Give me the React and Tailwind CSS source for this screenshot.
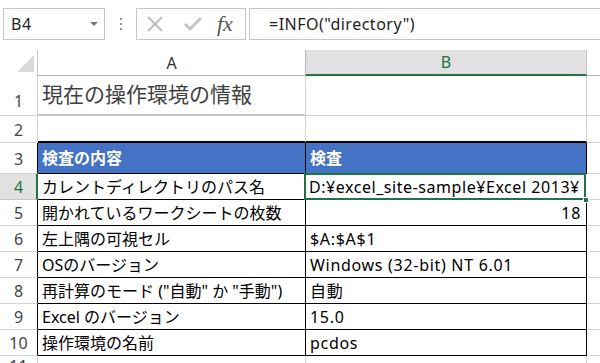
import React from 'react';

const font = { fontFamily: '"Noto Sans", "Noto Sans CJK JP", sans-serif' };

const rows = [
	{ n: '5', a: '開かれているワークシートの枚数', b: '18', right: true },
	{ n: '6', a: '左上隅の可視セル', b: '$A:$A$1' },
	{ n: '7', a: 'OSのバージョン', b: 'Windows (32-bit) NT 6.01' },
	{ n: '8', a: '再計算のモード ("自動" か "手動")', b: '自動' },
	{ n: '9', a: 'Excel のバージョン', b: '15.0' },
	{ n: '10', a: '操作環境の名前', b: 'pcdos' },
];

const FormulaBar = () => (
	<div className="flex h-[50px] items-start pt-[8px]">
		<div className="ml-[3px] flex h-[32px] w-[102px] items-center justify-between border border-[#c6c6c6] pl-[7px] pr-[5px] text-[16px] tracking-[0.5px] text-[#222]">
			<span>B4</span>
			<svg width="10" height="6" viewBox="0 0 10 6">
				<path d="M1 1 L9 1 L5 5 Z" fill="#777" />
			</svg>
		</div>
		<div className="flex h-[32px] w-[31px] flex-col items-center justify-center gap-[3px]">
			<span className="h-[2px] w-[2px] bg-[#999]" />
			<span className="h-[2px] w-[2px] bg-[#999]" />
			<span className="h-[2px] w-[2px] bg-[#999]" />
		</div>
		<div className="flex h-[32px] w-[110px] items-center border border-[#c6c6c6]">
			<svg className="ml-[9px]" width="18" height="18" viewBox="0 0 18 18">
				<path d="M2 2 L16 16 M16 2 L2 16" stroke="#bdbdbd" strokeWidth="2" />
			</svg>
			<svg className="ml-[19px]" width="20" height="16" viewBox="0 0 20 16">
				<path d="M2 8 L7 13 L18 2" stroke="#c4c4c4" strokeWidth="3" fill="none" />
			</svg>
			<span
				className="ml-[14px] text-[22px] italic leading-none text-[#555]"
				style={{ fontFamily: '"Liberation Serif", serif' }}
			>
				fx
			</span>
		</div>
		<div className="ml-[3px] flex h-[32px] flex-1 items-center border border-y-[#c6c6c6] border-l-[#c6c6c6] border-r-0 pl-[19px] text-[16px] tracking-[0.5px] text-[#222]">
			=INFO("directory")
		</div>
	</div>
);

const App = () => {
	return (
		<div className="h-[363px] w-[600px] overflow-hidden bg-white" style={font}>
			<FormulaBar />

			{/* column headers */}
			<div className="flex h-[26px]">
				<div className="relative w-[38px] border-r border-[#c6c6c6]">
					<svg className="absolute left-[17px] top-[5px]" width="17" height="17" viewBox="0 0 17 17">
						<path d="M17 0 L17 17 L0 17 Z" fill="#dadada" />
					</svg>
				</div>
				<div className="flex w-[268px] items-center justify-center border-b border-r border-[#b5b5b5] text-[16px] text-[#333]">
					A
				</div>
				<div className="flex w-[281px] items-center justify-center border-b-[2px] border-r border-b-[#217346] border-r-[#c6c6c6] bg-[#e1e1e1] text-[16px] text-[#217346]">
					B
				</div>
				<div className="flex-1 border-b border-[#b5b5b5]" />
			</div>

			{/* row 1 */}
			<div className="flex h-[40px]">
				<div className="flex w-[38px] items-end justify-center border-b border-r border-[#d4d4d4] pb-[2px] text-[16px] text-[#444]">
					1
				</div>
				<div className="flex w-[268px] items-end border-b-[2px] border-r border-b-[#c8c8c8] border-r-[#d4d4d4] pb-[4px] pl-[4px] text-[21px] text-[#404040]">
					現在の操作環境の情報
				</div>
				<div className="w-[281px] border-b border-r border-[#d4d4d4]" />
				<div className="flex-1 border-b border-[#d4d4d4]" />
			</div>

			{/* row 2 */}
			<div className="flex h-[27px]">
				<div className="flex w-[38px] items-end justify-center border-b border-r border-[#d4d4d4] text-[16px] text-[#444]">
					2
				</div>
				<div className="w-[268px] border-b-[2px] border-r border-b-black border-r-[#d4d4d4]" />
				<div className="w-[281px] border-b-[2px] border-r border-b-black border-r-[#d4d4d4]" />
				<div className="flex-1 border-b border-[#d4d4d4]" />
			</div>

			{/* row 3 header */}
			<div className="flex h-[31px]">
				<div className="flex w-[38px] items-end justify-center border-b border-r border-b-[#d4d4d4] border-r-black pb-[2px] text-[16px] text-[#444]">
					3
				</div>
				<div className="flex w-[268px] items-end border-b border-r border-black bg-[#4472c4] pb-[3px] pl-[4px] text-[16px] font-bold text-white">
					検査の内容
				</div>
				<div className="flex w-[281px] items-end border-b border-r border-black bg-[#4472c4] pb-[3px] pl-[4px] text-[16px] font-bold text-white">
					検査
				</div>
				<div className="flex-1 border-b border-[#d4d4d4]" />
			</div>

			{/* row 4 selected */}
			<div className="flex h-[26px]">
				<div className="flex w-[38px] items-end justify-center border-b border-r-[2px] border-b-[#c6c6c6] border-r-[#217346] bg-[#e1e1e1] pl-[1px] text-[16px] text-[#217346]">
					4
				</div>
				<div className="flex w-[267px] items-end border-b border-r border-black pl-[4px] text-[16px] text-black">
					カレントディレクトリのパス名
				</div>
				<div className="relative flex w-[281px] items-end border-b border-r border-black pl-[4px] text-[16px] tracking-[0.55px] text-black">
					D:¥excel_site-sample¥Excel 2013¥
					<div className="absolute -left-[1px] -top-[1px] bottom-[-1px] right-[-1px] border-[2px] border-[#217346]" />
					<div className="absolute -bottom-[4px] -right-[4px] h-[6px] w-[6px] border border-white bg-[#217346]" />
				</div>
				<div className="flex-1 border-b border-[#d4d4d4]" />
			</div>

			{rows.map((r) => (
				<div key={r.n} className="flex h-[26px]">
					<div className="flex w-[38px] items-end justify-center border-b border-r border-b-[#d4d4d4] border-r-black text-[16px] text-[#444]">
						{r.n}
					</div>
					<div className="flex w-[268px] items-end border-b border-r border-black pl-[4px] text-[16px] text-black">
						{r.a}
					</div>
					<div
						className={`flex w-[281px] items-end border-b border-r border-black text-[16px] tracking-[0.7px] text-black ${r.right ? 'justify-end pr-[5px]' : 'pl-[4px]'}`}
					>
						{r.b}
					</div>
					<div className="flex-1 border-b border-[#d4d4d4]" />
				</div>
			))}

			{/* row 11 partial */}
			<div className="flex h-[26px]">
				<div className="flex w-[38px] items-start justify-center border-r border-[#d4d4d4] pt-[2px] text-[16px] leading-none text-[#444]">
					11
				</div>
				<div className="w-[268px] border-r border-[#d4d4d4]" />
				<div className="w-[281px] border-r border-[#d4d4d4]" />
				<div className="flex-1" />
			</div>
		</div>
	);
};

export default App;
